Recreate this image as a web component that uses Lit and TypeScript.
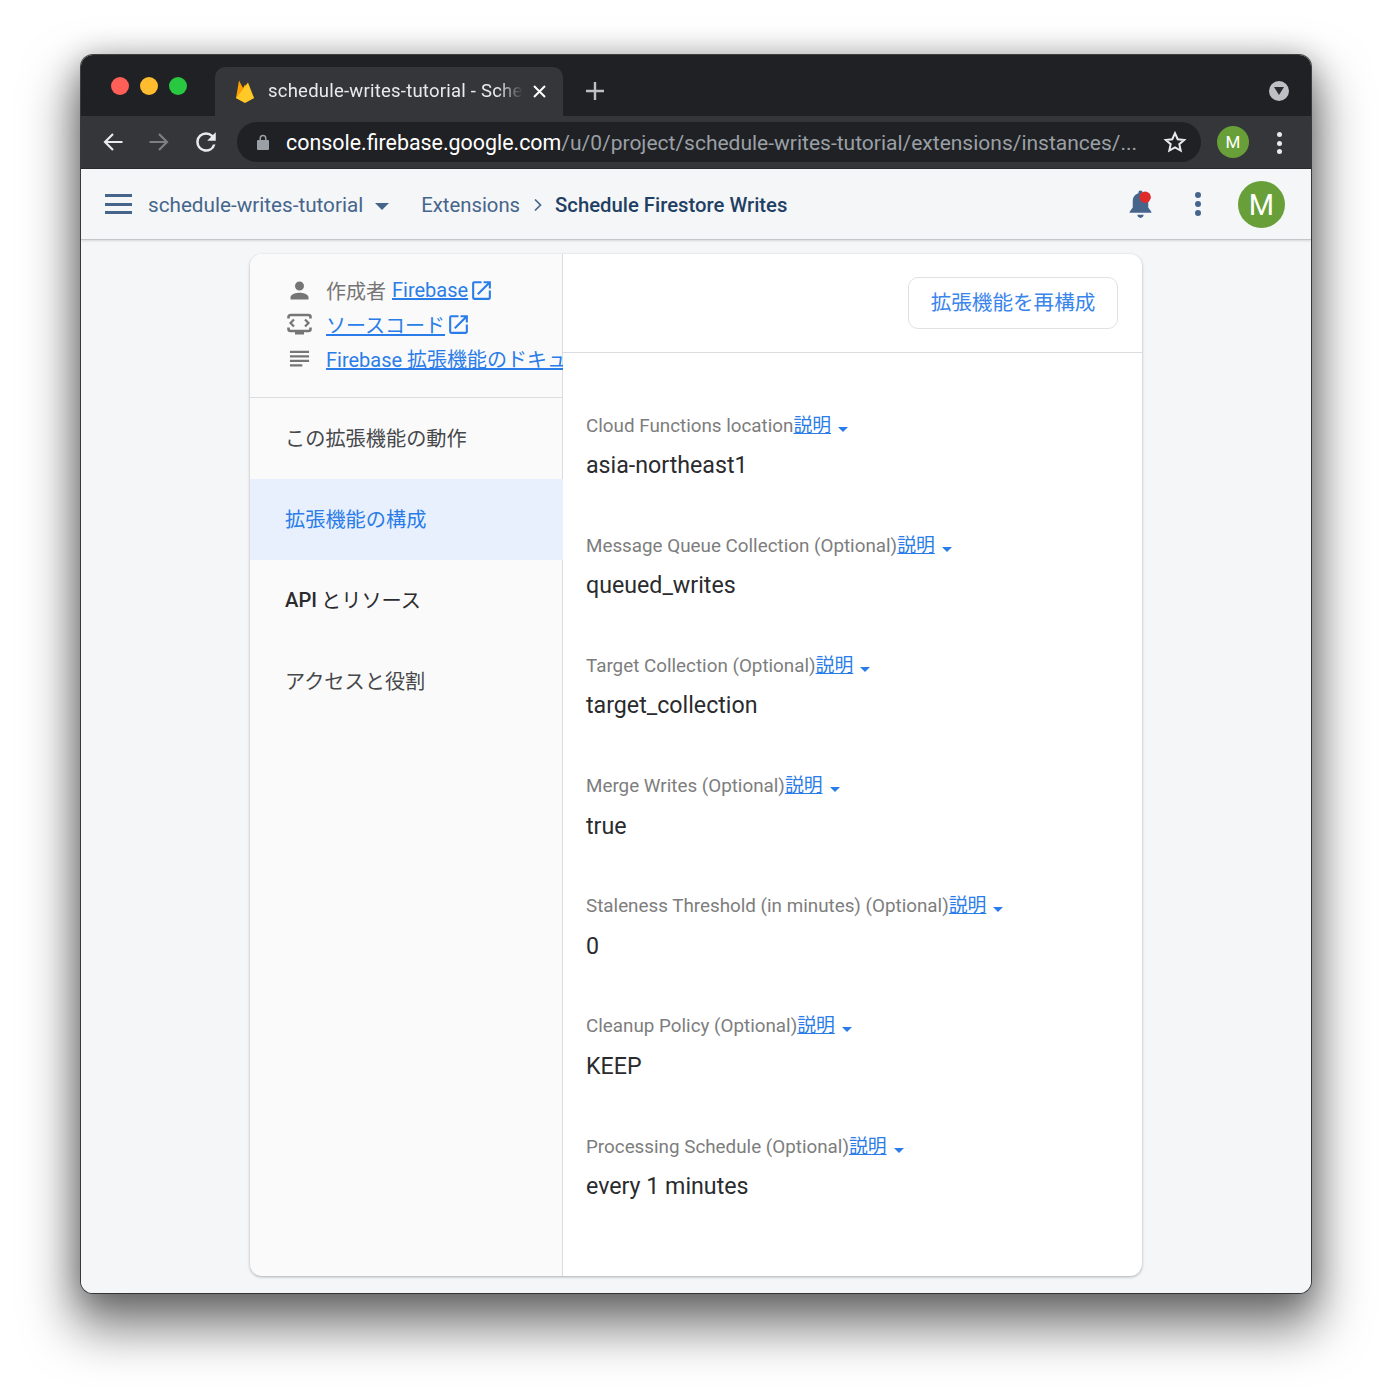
import { LitElement, html, css } from "lit";
import { customElement } from "lit/decorators.js";

const fields: [string, string][] = [
  ["Cloud Functions location", "asia-northeast1"],
  ["Message Queue Collection (Optional)", "queued_writes"],
  ["Target Collection (Optional)", "target_collection"],
  ["Merge Writes (Optional)", "true"],
  ["Staleness Threshold (in minutes) (Optional)", "0"],
  ["Cleanup Policy (Optional)", "KEEP"],
  ["Processing Schedule (Optional)", "every 1 minutes"],
];

const extIcon = html`<svg class="ext" viewBox="0 0 24 24" width="25" height="25"><path fill="#2a7de8" d="M19 19H5V5h7V3H5a2 2 0 0 0-2 2v14a2 2 0 0 0 2 2h14a2 2 0 0 0 2-2v-7h-2v7zM14 3v2h3.590l-9.830 9.830 1.410 1.410L19 6.410V10h2V3h-7z"/></svg>`;

@customElement("app-root")
export class AppRoot extends LitElement {
  static styles = css`
    :host { display: block; width: 1392px; height: 1400px; background: #fff; font-family: Roboto, "Noto Sans CJK JP", sans-serif; overflow: hidden; }
    .stage { padding: 55px 81px 0; height: 1400px; box-sizing: border-box; }
    .window { width: 1230px; height: 1238px; border-radius: 12px; overflow: hidden; background: #f5f6f8; display: flex; flex-direction: column;
      box-shadow: 0 0 0 1px rgba(40,40,40,.85), 0 28px 50px 8px rgba(0,0,0,.5), 0 4px 30px rgba(0,0,0,.3); }
    .tabstrip { height: 61px; background: #202124; display: flex; align-items: flex-end; padding-left: 134px; position: relative; flex: none; box-sizing: border-box; }
    .lights { position: absolute; left: 30px; top: 22px; display: flex; gap: 11px; }
    .lights i { width: 18px; height: 18px; border-radius: 50%; display: block; }
    .tab { width: 348px; height: 49px; background: #35363a; border-radius: 10px 10px 0 0; display: flex; align-items: center; position: relative; box-sizing: border-box; padding: 0 0 1px 20px; }
    .tab .fb { flex: none; }
    .tab-title { color: #e8eaed; font-size: 18.5px; letter-spacing: .23px; margin-left: 13px; width: 255px; white-space: nowrap; overflow: hidden; -webkit-mask-image: linear-gradient(90deg, #000 90%, transparent 100%); mask-image: linear-gradient(90deg, #000 90%, transparent 100%); }
    .tab .x { position: absolute; right: 17px; top: 18px; }
    .plus { margin-left: 22px; margin-bottom: 15px; }
    .menu-down { position: absolute; right: 22px; top: 26px; width: 20px; height: 20px; border-radius: 50%; background: #bdc1c6; display: flex; align-items: center; justify-content: center; }
    .toolbar { height: 53px; background: #35363a; display: flex; align-items: center; flex: none; position: relative; box-sizing: border-box; padding-left: 21px; border-bottom: 1px solid #2a2b2e; }
    .nav { width: 22px; height: 22px; margin-right: 24px; flex: none; }
    .reload { margin-left: 1px; }
    .omni { position: absolute; left: 156px; top: 6px; width: 964px; height: 40px; background: #202124; border-radius: 20px; display: flex; align-items: center; color: #9aa0a6; font-size: 21px; white-space: nowrap; box-sizing: border-box; padding-left: 20px; }
    .omni b { color: #fff; font-weight: 400; font-size: 21.4px; }
    .omni .lock { margin-right: 17px; flex: none; }
    .omni .star { position: absolute; right: 14px; top: 8px; }
    .chrome-avatar { position: absolute; left: 1136px; top: 10px; width: 32px; height: 32px; border-radius: 50%; background: #689f38; color: #fff; font-size: 17px; display: flex; align-items: center; justify-content: center; }
    .kebab-w { position: absolute; left: 1196px; top: 16px; display: flex; flex-direction: column; gap: 3.5px; }
    .kebab-w i { width: 5px; height: 5px; border-radius: 50%; background: #e8eaed; display: block; }
    .appbar { height: 71px; background: #f5f6f8; border-bottom: 1px solid #c4c6c9; box-shadow: 0 1px 2px rgba(0,0,0,.12); display: flex; align-items: center; flex: none; box-sizing: border-box; padding: 2px 0 0 24px; color: #46658b; font-size: 20.3px; position: relative; }
    .burger { display: flex; flex-direction: column; gap: 5.5px; margin: -2px 16px 0 0; }
    .burger i { display: block; width: 27px; height: 3px; background: #46658b; }
    .proj { font-size: 20.7px; }
    .caret { margin-left: 12px; margin-right: 32px; width: 0; height: 0; border-left: 7px solid transparent; border-right: 7px solid transparent; border-top: 7px solid #46658b; margin-top: 3px; }
    .chev { margin: 0 13px 0 14px; }
    .crumb-b { color: #1f3f63; font-weight: 500; }
    .bell { position: absolute; left: 1045px; top: 20px; }
    .kebab-a { position: absolute; left: 1114px; top: 23px; display: flex; flex-direction: column; gap: 3.2px; }
    .kebab-a i { width: 6px; height: 6px; border-radius: 50%; background: #46658b; display: block; }
    .avatar { position: absolute; left: 1157px; top: 12px; width: 47px; height: 47px; border-radius: 50%; background: #689f38; color: #fff; font-size: 29px; display: flex; align-items: center; justify-content: center; }
    .body { flex: 1; padding: 14px 169px 17px; min-height: 0; display: flex; background: #f5f6f8; }
    .card { flex: 1; display: flex; border-radius: 12px; background: #fff; box-shadow: 0 1px 3px rgba(60,64,67,.4); overflow: hidden; }
    .side { width: 313px; flex: none; background: #fafafa; box-shadow: inset -1px 0 0 #dadce0; box-sizing: border-box; overflow: hidden; }
    .side-top { height: 144px; border-bottom: 1px solid #dadce0; padding-top: 19px; box-sizing: border-box; white-space: nowrap; }
    .meta { height: 34.2px; display: flex; align-items: center; font-size: 20px; color: #757575; }
    .meta svg.ic { margin: 0 13px 0 36px; flex: none; width: 27px; height: 27px; }
    .side a, .label a { color: #2a7de8; text-decoration: underline; }
    .side a { margin-right: 3px; }
    .ext { flex: none; margin-left: -2px; }
    .by { margin-right: 6px; }
    .item { height: 81px; display: flex; align-items: center; padding: 0 0 2px 35px; font-size: 20.2px; color: #46484b; box-sizing: border-box; }
    .item.on { background: #e8f0fe; color: #2a7de8; }
    .item.strong { color: #2a2b2e; }
    .item b { font-weight: 500; margin-right: 4px; }
    .main { flex: 1; min-width: 0; }
    .actions { height: 99px; border-bottom: 1px solid #dadce0; display: flex; align-items: flex-start; justify-content: flex-end; padding: 23px 24px 0 0; box-sizing: border-box; }
    .btn { width: 210px; height: 52px; border: 1px solid #dfe1e5; border-radius: 10px; color: #3a85ec; font-size: 20.6px; display: flex; align-items: center; justify-content: center; box-sizing: border-box; background: #fff; padding-bottom: 5px; }
    .fields { padding: 60.5px 0 0 23px; }
    .field { height: 120.2px; }
    .label { font-size: 18.82px; color: #7d7d7d; line-height: 24px; display: flex; align-items: center; white-space: nowrap; }
    .tri { width: 0; height: 0; border-left: 5px solid transparent; border-right: 5px solid transparent; border-top: 5px solid #2a7de8; margin-left: 7px; margin-top: 7px; }
    .value { font-size: 23.2px; color: #2a2b2e; line-height: 30px; margin-top: 12.5px; }
  `;

  render() {
    return html`<div class="stage"><div class="window">
      <div class="tabstrip">
        <div class="lights"><i style="background:#ff5f57"></i><i style="background:#febc2e"></i><i style="background:#28c840"></i></div>
        <div class="tab">
          <svg class="fb" width="20" height="24" viewBox="0 0 20 24">
            <path fill="#ffa000" d="M1 19 4 1.500l4 7.500 2-3.500 9 13.500-9 4.500z"/>
            <path fill="#f57c00" d="M10.500 11.500 8 9 1 19z"/>
            <path fill="#ffca28" d="M1 19 13 3.500l6 15.500-9 5z"/>
          </svg>
          <div class="tab-title">schedule-writes-tutorial - Schedule Firestore Writes</div>
          <svg class="x" width="13" height="13" viewBox="0 0 13 13"><path d="M1 1l11 11M12 1 1 12" stroke="#fff" stroke-width="2"/></svg>
        </div>
        <svg class="plus" width="20" height="20" viewBox="0 0 20 20"><path d="M10 1v18M1 10h18" stroke="#bdc1c6" stroke-width="2.400"/></svg>
        <div class="menu-down"><svg width="10" height="8" viewBox="0 0 10 8"><path d="M0 0h10L5 8z" fill="#2b2c30"/></svg></div>
      </div>
      <div class="toolbar">
        <svg class="nav" viewBox="0 0 22 22"><path d="M20.500 11H3M11 3l-8 8 8 8" fill="none" stroke="#e8eaed" stroke-width="2.200"/></svg>
        <svg class="nav" viewBox="0 0 22 22"><path d="M1.500 11H19M11 3l8 8-8 8" fill="none" stroke="#7c7f84" stroke-width="2.200"/></svg>
        <svg class="nav reload" viewBox="3 3 18 18"><path fill="#e8eaed" d="M17.650 6.350A7.958 7.958 0 0 0 12 4a8 8 0 1 0 7.730 10h-2.080A5.990 5.990 0 0 1 12 18a6 6 0 1 1 0-12c1.660 0 3.140.69 4.220 1.780L13 11h7V4l-2.350 2.350z"/></svg>
        <div class="omni">
          <svg class="lock" width="12" height="16" viewBox="0 0 12 16"><path fill="#9aa0a6" d="M2.500 6V4.200a3.500 3.500 0 0 1 7 0V6H11a1 1 0 0 1 1 1v8a1 1 0 0 1-1 1H1a1 1 0 0 1-1-1V7a1 1 0 0 1 1-1zm1.500 0h4V4.200a2 2 0 0 0-4 0z"/></svg>
          <span><b>console.firebase.google.com</b>/u/0/project/schedule-writes-tutorial/extensions/instances/...</span>
          <svg class="star" width="24" height="24" viewBox="0 0 24 24"><path fill="none" stroke="#e8eaed" stroke-width="2" d="M12 3.200l2.700 6 6.500.7-4.900 4.300 1.400 6.400L12 17.300l-5.700 3.300 1.400-6.400-4.900-4.300 6.500-.7z"/></svg>
        </div>
        <div class="chrome-avatar">M</div>
        <div class="kebab-w"><i></i><i></i><i></i></div>
      </div>
      <div class="appbar">
        <div class="burger"><i></i><i></i><i></i></div>
        <span class="proj">schedule-writes-tutorial</span>
        <div class="caret"></div>
        <span>Extensions</span>
        <svg class="chev" width="8" height="14" viewBox="0 0 8 14"><path d="M1 1.500 6.500 7 1 12.500" fill="none" stroke="#46658b" stroke-width="1.700"/></svg>
        <span class="crumb-b">Schedule Firestore Writes</span>
        <svg class="bell" width="29" height="31" viewBox="0 0 28 30">
          <path fill="#46658b" d="M14 1.500c1.200 0 2 .8 2 2v.700c3.600 1 5.500 4 5.500 7.800v6l3 4v1h-21v-1l3-4v-6c0-3.800 1.900-6.800 5.500-7.800v-.700c0-1.200.8-2 2-2zM11 25h6c0 1.700-1.300 3-3 3s-3-1.300-3-3z"/>
          <circle cx="18.500" cy="8" r="5.500" fill="#e02b2b"/>
        </svg>
        <div class="kebab-a"><i></i><i></i><i></i></div>
        <div class="avatar">M</div>
      </div>
      <div class="body"><div class="card">
        <div class="side">
          <div class="side-top">
            <div class="meta">
              <svg class="ic" viewBox="0 0 24 24"><path fill="#757575" d="M12 12a4 4 0 1 0 0-8 4 4 0 0 0 0 8zm0 2c-2.700 0-8 1.300-8 4v2h16v-2c0-2.700-5.300-4-8-4z"/></svg>
              <span class="by">作成者</span><a>Firebase</a>${extIcon}
            </div>
            <div class="meta">
              <svg class="ic" viewBox="0 0 27 27"><path fill="none" stroke="#757575" stroke-width="2.600" d="M2.500 7.500V6a2 2 0 0 1 2-2h18a2 2 0 0 1 2 2v1.500M2.500 16.500V18a2 2 0 0 0 2 2h18a2 2 0 0 0 2-2v-1.500"/><path fill="none" stroke="#757575" stroke-width="2.200" d="M8 8.500 4.500 12 8 15.500M19 8.500l3.500 3.500-3.500 3.500"/><path fill="#757575" d="M9 21h9v2.500H9z"/></svg>
              <a>ソースコード</a>${extIcon}
            </div>
            <div class="meta">
              <svg class="ic" viewBox="0 0 24 24"><path fill="#757575" d="M3.500 5h17v2h-17zM3.500 9h17v2h-17zM3.500 13h17v2h-17zM3.500 17h11v2h-11z"/></svg>
              <a>Firebase 拡張機能のドキュメント</a>
            </div>
          </div>
          <div>
            <div class="item">この拡張機能の動作</div>
            <div class="item on">拡張機能の構成</div>
            <div class="item strong"><b>API</b>とリソース</div>
            <div class="item">アクセスと役割</div>
          </div>
        </div>
        <div class="main">
          <div class="actions"><div class="btn">拡張機能を再構成</div></div>
          <div class="fields">
            ${fields.map(([l, v]) => html`<div class="field">
              <div class="label"><span>${l}</span><a>説明</a><span class="tri"></span></div>
              <div class="value">${v}</div>
            </div>`)}
          </div>
        </div>
      </div></div>
    </div></div>`;
  }
}
